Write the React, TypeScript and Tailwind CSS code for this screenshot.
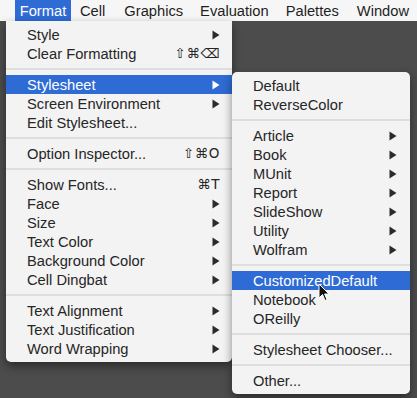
import React from "react";

type Item =
  | { kind: "sep" }
  | { kind: "item"; label: string; sub?: boolean; shortcut?: string; active?: boolean };

const mainItems: Item[] = [
  { kind: "item", label: "Style", sub: true },
  { kind: "item", label: "Clear Formatting", shortcut: "⇧⌘⌫" },
  { kind: "sep" },
  { kind: "item", label: "Stylesheet", sub: true, active: true },
  { kind: "item", label: "Screen Environment", sub: true },
  { kind: "item", label: "Edit Stylesheet..." },
  { kind: "sep" },
  { kind: "item", label: "Option Inspector...", shortcut: "⇧⌘O" },
  { kind: "sep" },
  { kind: "item", label: "Show Fonts...", shortcut: "⌘T" },
  { kind: "item", label: "Face", sub: true },
  { kind: "item", label: "Size", sub: true },
  { kind: "item", label: "Text Color", sub: true },
  { kind: "item", label: "Background Color", sub: true },
  { kind: "item", label: "Cell Dingbat", sub: true },
  { kind: "sep" },
  { kind: "item", label: "Text Alignment", sub: true },
  { kind: "item", label: "Text Justification", sub: true },
  { kind: "item", label: "Word Wrapping", sub: true },
];

const subItems: Item[] = [
  { kind: "item", label: "Default" },
  { kind: "item", label: "ReverseColor" },
  { kind: "sep" },
  { kind: "item", label: "Article", sub: true },
  { kind: "item", label: "Book", sub: true },
  { kind: "item", label: "MUnit", sub: true },
  { kind: "item", label: "Report", sub: true },
  { kind: "item", label: "SlideShow", sub: true },
  { kind: "item", label: "Utility", sub: true },
  { kind: "item", label: "Wolfram", sub: true },
  { kind: "sep" },
  { kind: "item", label: "CustomizedDefault", active: true },
  { kind: "item", label: "Notebook" },
  { kind: "item", label: "OReilly" },
  { kind: "sep" },
  { kind: "item", label: "Stylesheet Chooser..." },
  { kind: "sep" },
  { kind: "item", label: "Other..." },
];

function Arrow({ white }: { white?: boolean }) {
  return (
    <svg width="8" height="10" viewBox="0 0 8 10">
      <path d="M0.5 0.5 L7.5 5 L0.5 9.5 Z" fill={white ? "#ffffff" : "#2b2b2b"} />
    </svg>
  );
}

function MenuRows({ items, arrowPr }: { items: Item[]; arrowPr: string }) {
  return (
    <>
      {items.map((it, i) =>
        it.kind === "sep" ? (
          <div key={i} className="h-[12px] flex items-center">
            <div className="h-[2px] w-full bg-[#dedede]" />
          </div>
        ) : (
          <div
            key={i}
            className={`h-[19px] flex items-center justify-between pl-[21px] ${arrowPr} ${
              it.active ? "bg-[#2e6bd4] text-white" : "text-[#262626]"
            }`}
          >
            <span className="pt-[2px]">{it.label}</span>
            {it.sub ? <Arrow white={it.active} /> : null}
            {it.shortcut ? (
              <span className="font-['DejaVu_Sans',sans-serif] text-[13.5px] tracking-[0.5px] pt-[1px]">{it.shortcut}</span>
            ) : null}
          </div>
        )
      )}
    </>
  );
}

export default function App() {
  return (
    <div className="relative w-[417px] h-[398px] overflow-hidden bg-[#4c4c4c] font-['Liberation_Sans',Arial,sans-serif] text-[14.7px] leading-none">
      <div className="h-[21px] bg-[#f6f6f6] flex items-stretch text-[#1e1e1e]">
        <div className="ml-[15px] w-[56px] bg-[#2e6bd4] text-white flex items-center justify-center pt-[1px]">Format</div>
        <div className="ml-[9px] flex items-center pt-[1px]">Cell</div>
        <div className="ml-[19px] flex items-center pt-[1px]">Graphics</div>
        <div className="ml-[17px] flex items-center pt-[1px]">Evaluation</div>
        <div className="ml-[17px] flex items-center pt-[1px]">Palettes</div>
        <div className="ml-[18px] flex items-center pt-[1px]">Window</div>
      </div>
      <div className="flex items-start pl-[6px]">
        <div className="w-[226px] bg-[#f3f3f3] rounded-b-[5px] py-[4px] shadow-[0_4px_10px_rgba(0,0,0,0.45)]">
          <MenuRows items={mainItems} arrowPr="pr-[12px]" />
        </div>
        <div className="mt-[51px] w-[178px] bg-[#f3f3f3] rounded-[5px] py-[4px] shadow-[0_4px_10px_rgba(0,0,0,0.45)]">
          <MenuRows items={subItems} arrowPr="pr-[13px]" />
        </div>
      </div>
      <svg className="absolute left-[318px] top-[283px]" width="12" height="19" viewBox="0 0 12 19">
        <path d="M1 1 L1 15 L4.5 11.5 L7 17.5 L9 16.6 L6.6 11 L11 11 Z" fill="#111" stroke="#fff" strokeWidth="1" />
      </svg>
    </div>
  );
}
